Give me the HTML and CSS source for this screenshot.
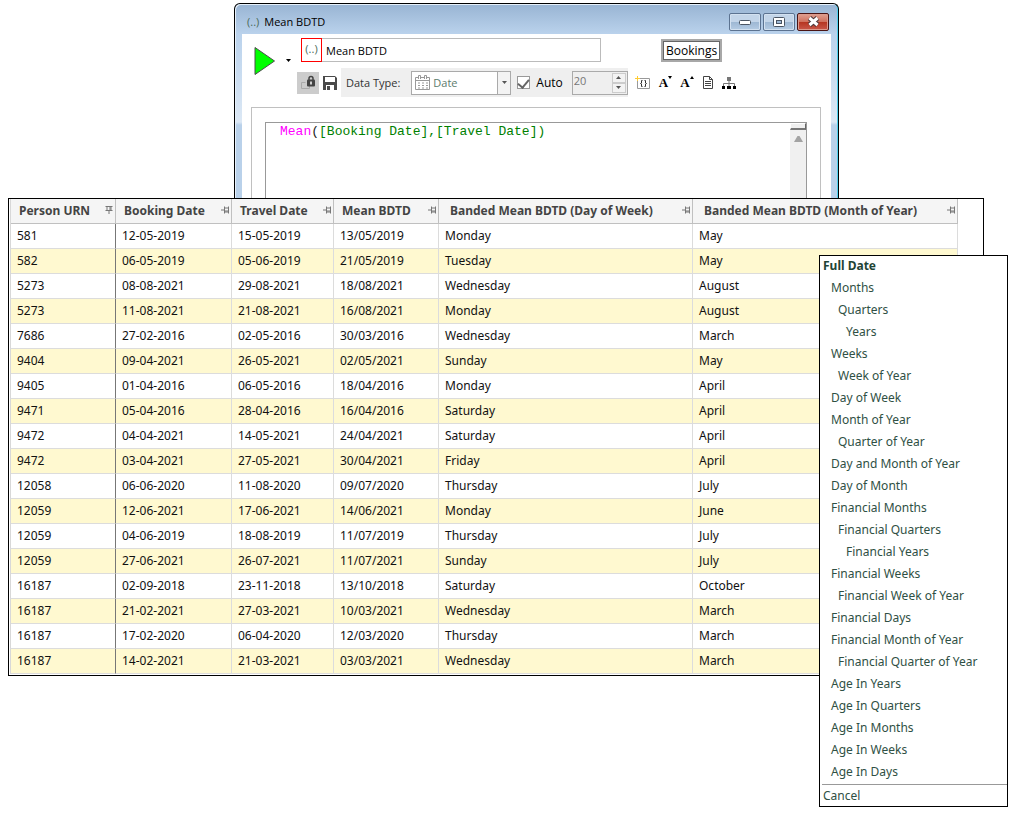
FILE: index.html
```html
<!DOCTYPE html>
<html lang="en">
<head>
    <meta charset="UTF-8">
    <meta name="viewport" content="width=device-width, initial-scale=1.0">
    <title>Mean BDTD</title>
    <link rel="stylesheet" href="styles.css">
</head>
<body>
    <svg class="sprite" aria-hidden="true">
        <symbol id="pin" viewBox="0 0 8 7">
            <path d="M0 3.5H3M3.5 0V7M3.5 1.5H7M3.5 4.5H7M3.5 5.5H7M7.5 0V7" fill="none" stroke="#777"/>
        </symbol>
        <symbol id="pin-down" viewBox="0 0 7 8">
            <path d="M3.5 5V8M0 4.5H7M1.5 0V4M4.5 0V4M5.5 0V4M0 0.5H7" fill="none" stroke="#777"/>
        </symbol>
    </svg>

    <!-- Expression window -->
    <section class="window">
        <header class="titlebar">
            <span class="title-icon">(..)</span>
            <h1 class="title">Mean BDTD</h1>
            <div class="window-buttons">
                <button class="win-btn" aria-label="Minimize">
                    <svg width="12" height="6" viewBox="0 0 12 6"><rect x="0.5" y="1.5" width="11" height="4" rx="1" fill="#fff" stroke="#4b5563"/></svg>
                </button>
                <button class="win-btn" aria-label="Maximize">
                    <svg width="12" height="10" viewBox="0 0 12 10"><rect x="0.5" y="0.5" width="11" height="9" rx="1" fill="#fff" stroke="#4b5563"/><rect x="3.5" y="3.5" width="5" height="3" fill="#9fb9d6" stroke="#4b5563"/></svg>
                </button>
                <button class="win-btn close" aria-label="Close">
                    <svg width="13" height="11" viewBox="0 0 13 11"><path d="M2.5 2L10.5 9M10.5 2L2.5 9" stroke="#49383c" stroke-width="5"/><path d="M2.5 2L10.5 9M10.5 2L2.5 9" stroke="#fff" stroke-width="3"/></svg>
                </button>
            </div>
        </header>

        <div class="window-body">
            <div class="top">
                <button class="run" aria-label="Run">
                    <svg width="22" height="30" viewBox="0 0 22 30"><path d="M1 1.5V28.5L20.5 15Z" fill="#0f0" stroke="#4d4d4d"/></svg>
                </button>
                <button class="run-more" aria-label="Run options">
                    <svg width="5" height="3" viewBox="0 0 5 3"><path d="M0 0H5L2.5 3Z"/></svg>
                </button>
                <div class="controls">
                    <div class="name-row">
                        <span class="expr-icon">(..)</span>
                        <input class="name-input" type="text" value="Mean BDTD" aria-label="Name">
                        <button class="table-btn">Bookings</button>
                    </div>
                    <div class="toolbar">
                        <button class="tool lock" aria-label="Lock">
                            <svg width="16" height="16" viewBox="0 0 16 16"><path d="M5.5 7.5H1.5V13.5H9.5V11" fill="none" stroke="#aaa"/><path d="M9 5V3.5a2 2 0 0 1 4 0V5" fill="none" stroke="#444" stroke-width="1.5"/><rect x="7" y="4.5" width="8" height="7" rx="1" fill="#444"/><path d="M11 6.5V9.5" stroke="#fff" stroke-width="1.5"/></svg>
                        </button>
                        <button class="tool save" aria-label="Save">
                            <svg width="16" height="16" viewBox="0 0 16 16"><path d="M1 1H13L15 3V15H1Z" fill="#4a4a4a"/><rect x="3" y="2" width="10" height="5" fill="#fff"/><rect x="4" y="10" width="8" height="5" fill="#fff"/><rect x="5" y="11" width="3" height="4" fill="#4a4a4a"/></svg>
                        </button>
                        <div class="type-strip">
                            <label for="dataType">Data Type:</label>
                            <div class="select-box">
                                <svg class="calendar" width="15" height="15" viewBox="0 0 15 15"><path d="M3 2.5H0.5V14.5H14.5V2.5H12M6 2.5H9M0.5 5.5H14.5" fill="none" stroke="#999"/><path d="M3.5 4V0.5H5.5V4M9.5 4V0.5H11.5V4" fill="none" stroke="#999"/><path d="M3 8H13M3 10.5H13M3 13H13" stroke="#999" stroke-dasharray="2 2"/></svg>
                                <select id="dataType" disabled>
                                    <option>Date</option>
                                </select>
                                <span class="select-arrow"><svg width="5" height="3" viewBox="0 0 5 3"><path d="M0 0H5L2.5 3Z" fill="#555"/></svg></span>
                            </div>
                            <input class="check" type="checkbox" id="auto" checked>
                            <label class="auto-label" for="auto">Auto</label>
                            <div class="spinner">
                                <input type="number" value="20" aria-label="Length" disabled>
                                <div class="spin-buttons">
                                    <button aria-label="Increase" disabled><svg width="5" height="3" viewBox="0 0 5 3"><path d="M0 3H5L2.5 0Z" fill="#555"/></svg></button>
                                    <button aria-label="Decrease" disabled><svg width="5" height="3" viewBox="0 0 5 3"><path d="M0 0H5L2.5 3Z" fill="#555"/></svg></button>
                                </div>
                            </div>
                        </div>
                        <div class="tool-icons">
                            <button class="tool" aria-label="Insert expression">
                                <svg width="16" height="14" viewBox="0 0 16 14"><path d="M5 2.5H14.5V12.5H2.5V5" fill="none" stroke="#999"/><path d="M2.5 0V5M0 2.5H5" stroke="#fc3"/><path d="M7.5 4.5H6.5V7L5.5 7.5L6.5 8V10.5H7.5M9.5 4.5H10.5V7L11.5 7.5L10.5 8V10.5H9.5" fill="none" stroke="#333"/></svg>
                            </button>
                            <button class="tool font-tool" aria-label="Decrease font">A<svg width="4" height="3" viewBox="0 0 4 3"><path d="M0 0H4L2 3Z"/></svg></button>
                            <button class="tool font-tool" aria-label="Increase font">A<svg width="4" height="3" viewBox="0 0 4 3"><path d="M0 3H4L2 0Z"/></svg></button>
                            <button class="tool" aria-label="Notes">
                                <svg width="12" height="14" viewBox="0 0 12 14"><path d="M1.5 0.5H7.5L10.5 3.5V12.5H1.5ZM7.5 0.5V3.5H10.5M3 5.5H9M3 7.5H9M3 9.5H9" fill="none" stroke="#444"/></svg>
                            </button>
                            <button class="tool" aria-label="Tree view">
                                <svg width="14" height="12" viewBox="0 0 14 12"><path d="M7 3V9M1.5 9V6.5H12.5V9" fill="none" stroke="#777"/><path d="M5 0H9V4H5Z" fill="#777"/><path d="M0 9H3V12H0ZM5 9H9V12H5ZM11 9H14V12H11Z"/></svg>
                            </button>
                        </div>
                    </div>
                </div>
            </div>

            <div class="editor-frame">
                <div class="editor">
                    <code class="code"><span class="fn">Mean</span><span class="paren">(</span>[Booking Date],[Travel Date])</code>
                    <div class="scrollbar">
                        <span class="splitter"></span>
                        <svg width="9" height="6" viewBox="0 0 9 6"><path d="M0 6L3.5 0H5.5L9 6Z" fill="#a3a3a3"/></svg>
                    </div>
                </div>
            </div>
        </div>
    </section>

    <!-- Data grid -->
    <section class="grid-panel">
        <table class="grid">
            <colgroup>
                <col class="c-urn"><col class="c-booking"><col class="c-travel"><col class="c-mean"><col class="c-day"><col>
            </colgroup>
            <thead>
                <tr>
                    <th><div class="head">Person URN <svg><use href="#pin-down"/></svg></div></th>
                    <th><div class="head">Booking Date <svg><use href="#pin"/></svg></div></th>
                    <th><div class="head">Travel Date <svg><use href="#pin"/></svg></div></th>
                    <th><div class="head">Mean BDTD <svg><use href="#pin"/></svg></div></th>
                    <th><div class="head wide">Banded Mean BDTD (Day of Week) <svg><use href="#pin"/></svg></div></th>
                    <th><div class="head wide">Banded Mean BDTD (Month of Year) <svg><use href="#pin"/></svg></div></th>
                </tr>
            </thead>
            <tbody>
                <tr><td>581</td><td>12-05-2019</td><td>15-05-2019</td><td>13/05/2019</td><td>Monday</td><td>May</td></tr>
                <tr><td>582</td><td>06-05-2019</td><td>05-06-2019</td><td>21/05/2019</td><td>Tuesday</td><td>May</td></tr>
                <tr><td>5273</td><td>08-08-2021</td><td>29-08-2021</td><td>18/08/2021</td><td>Wednesday</td><td>August</td></tr>
                <tr><td>5273</td><td>11-08-2021</td><td>21-08-2021</td><td>16/08/2021</td><td>Monday</td><td>August</td></tr>
                <tr><td>7686</td><td>27-02-2016</td><td>02-05-2016</td><td>30/03/2016</td><td>Wednesday</td><td>March</td></tr>
                <tr><td>9404</td><td>09-04-2021</td><td>26-05-2021</td><td>02/05/2021</td><td>Sunday</td><td>May</td></tr>
                <tr><td>9405</td><td>01-04-2016</td><td>06-05-2016</td><td>18/04/2016</td><td>Monday</td><td>April</td></tr>
                <tr><td>9471</td><td>05-04-2016</td><td>28-04-2016</td><td>16/04/2016</td><td>Saturday</td><td>April</td></tr>
                <tr><td>9472</td><td>04-04-2021</td><td>14-05-2021</td><td>24/04/2021</td><td>Saturday</td><td>April</td></tr>
                <tr><td>9472</td><td>03-04-2021</td><td>27-05-2021</td><td>30/04/2021</td><td>Friday</td><td>April</td></tr>
                <tr><td>12058</td><td>06-06-2020</td><td>11-08-2020</td><td>09/07/2020</td><td>Thursday</td><td>July</td></tr>
                <tr><td>12059</td><td>12-06-2021</td><td>17-06-2021</td><td>14/06/2021</td><td>Monday</td><td>June</td></tr>
                <tr><td>12059</td><td>04-06-2019</td><td>18-08-2019</td><td>11/07/2019</td><td>Thursday</td><td>July</td></tr>
                <tr><td>12059</td><td>27-06-2021</td><td>26-07-2021</td><td>11/07/2021</td><td>Sunday</td><td>July</td></tr>
                <tr><td>16187</td><td>02-09-2018</td><td>23-11-2018</td><td>13/10/2018</td><td>Saturday</td><td>October</td></tr>
                <tr><td>16187</td><td>21-02-2021</td><td>27-03-2021</td><td>10/03/2021</td><td>Wednesday</td><td>March</td></tr>
                <tr><td>16187</td><td>17-02-2020</td><td>06-04-2020</td><td>12/03/2020</td><td>Thursday</td><td>March</td></tr>
                <tr><td>16187</td><td>14-02-2021</td><td>21-03-2021</td><td>03/03/2021</td><td>Wednesday</td><td>March</td></tr>
            </tbody>
        </table>
    </section>

    <!-- Banding menu -->
    <nav class="menu">
        <button class="full">Full Date</button>
        <button class="l1">Months</button>
        <button class="l2">Quarters</button>
        <button class="l3">Years</button>
        <button class="l1">Weeks</button>
        <button class="l2">Week of Year</button>
        <button class="l1">Day of Week</button>
        <button class="l1">Month of Year</button>
        <button class="l2">Quarter of Year</button>
        <button class="l1">Day and Month of Year</button>
        <button class="l1">Day of Month</button>
        <button class="l1">Financial Months</button>
        <button class="l2">Financial Quarters</button>
        <button class="l3">Financial Years</button>
        <button class="l1">Financial Weeks</button>
        <button class="l2">Financial Week of Year</button>
        <button class="l1">Financial Days</button>
        <button class="l1">Financial Month of Year</button>
        <button class="l2">Financial Quarter of Year</button>
        <button class="l1">Age In Years</button>
        <button class="l1">Age In Quarters</button>
        <button class="l1">Age In Months</button>
        <button class="l1">Age In Weeks</button>
        <button class="l1">Age In Days</button>
        <hr>
        <button class="cancel">Cancel</button>
    </nav>
</body>
</html>
```
FILE: styles.css
```css
* { margin: 0; padding: 0; box-sizing: border-box; }

body {
    font-family: 'Segoe UI', 'Noto Sans', sans-serif;
    font-size: 12px;
    color: #111;
    background: #fff;
    padding-top: 3px;
}

button, input, select {
    font: inherit;
    color: inherit;
    border: none;
    background: none;
}

svg { display: block; flex: none; }

.sprite { width: 0; height: 0; position: absolute; }

/* Expression window */
.window {
    margin: 0 175px 0 234px;
    border: 1px solid #000;
    border-bottom: none;
    border-radius: 6px 6px 0 0;
    padding: 0 7px;
    font-family: 'Segoe UI', 'Open Sans', sans-serif;
    font-size: 11px;
    background: linear-gradient(#98b4d3, #bad2ec 30px, #dce8f5 118px, #b9d1ea 121px);
    box-shadow: inset 1px 1px 0 #e6f0fa, inset -1px 0 0 #4fd0ee;
}

.titlebar {
    display: flex;
    align-items: center;
    gap: 5px;
    height: 30px;
    padding: 5px 2px 0 5px;
}

.title {
    font-size: 11px;
    font-weight: normal;
    color: #000;
}

.title-icon, .expr-icon { color: #4a6a5a; }

.window-buttons {
    display: flex;
    gap: 2px;
    margin-left: auto;
}

.win-btn {
    display: flex;
    align-items: center;
    justify-content: center;
    width: 32px;
    height: 18px;
    border: 1px solid #5c7391;
    border-radius: 2px;
    background: linear-gradient(#c3d5e9 50%, #9db7d3 50%, #b5cce4);
    box-shadow: inset 0 0 0 1px #d3e1f0;
}

.win-btn.close {
    border-color: #4a1414;
    background: linear-gradient(#e0a091, #cf6f5c 50%, #b53420 50%, #c9584a);
    box-shadow: inset 0 0 0 1px #dc9a8c;
}

.window-body {
    background: #fff;
    padding: 4px 10px 0 9px;
}

.top { display: flex; }

.run { align-self: flex-start; margin: 8px 0 0 3px; }

.run-more {
    align-self: flex-start;
    margin: 21px 10px 0 10px;
}

.name-row {
    display: flex;
    align-items: center;
    height: 24px;
}

.expr-icon {
    width: 21px;
    height: 24px;
    line-height: 20px;
    text-align: center;
    border: 1px solid #f00;
}

.name-input {
    width: 279px;
    height: 24px;
    padding: 0 4px;
    border: 1px solid #bbb;
    border-left: none;
    color: #000;
}

.table-btn {
    height: 23px;
    line-height: 17px;
    margin-left: 60px;
    padding: 0 3px;
    border: 2px solid #a8a8a8;
    box-shadow: inset 0 0 0 1px #666;
    font-size: 12px;
    color: #000;
}

.controls { flex: 1; }

.toolbar {
    display: flex;
    align-items: center;
    height: 29px;
    margin: 6px 0 10px -4px;
}

.tool { display: flex; align-items: center; justify-content: center; }

.tool.lock {
    width: 22px;
    height: 22px;
    background: #ccc;
}

.tool.save { width: 22px; }

.type-strip {
    display: flex;
    align-items: center;
    height: 29px;
    padding-left: 5px;
    background: #efefef;
    color: #333;
}

.select-box {
    display: flex;
    align-items: center;
    width: 100px;
    height: 24px;
    margin: 0 6px 0 11px;
    border: 1px solid #aaa;
    background: #fff;
}

.calendar { margin-left: 3px; }

.select-box select {
    flex: 1;
    min-width: 0;
    padding-left: 3px;
    appearance: none;
    color: #5c7c6c;
    opacity: 1;
}

.select-arrow {
    display: flex;
    align-items: center;
    justify-content: center;
    align-self: stretch;
    width: 13px;
    border-left: 1px solid #aaa;
    background: #f3f3f3;
}

.check {
    appearance: none;
    display: flex;
    justify-content: center;
    width: 13px;
    height: 13px;
    margin-right: 6px;
    border: 1px solid #999;
    background: #fff;
}

.check:checked::before {
    content: "";
    width: 5px;
    height: 9px;
    border: solid #666;
    border-width: 0 2px 2px 0;
    transform: rotate(40deg);
}

.auto-label {
    font-size: 12px;
    color: #000;
}

.spinner {
    display: flex;
    width: 56px;
    height: 24px;
    margin-left: 9px;
    border: 1px solid #aaa;
}

.spinner input {
    flex: 1;
    min-width: 0;
    height: 18px;
    padding-left: 1px;
    color: #777;
    appearance: textfield;
}

.spin-buttons {
    display: flex;
    flex-direction: column;
    width: 16px;
    padding: 1px;
}

.spin-buttons button {
    display: flex;
    flex: 1;
    align-items: center;
    justify-content: center;
    border: 1px solid #ccc;
    background: #f3f3f3;
}

.tool-icons {
    display: flex;
    align-items: center;
    gap: 8px;
    margin-left: 7px;
}

.font-tool {
    align-items: flex-start;
    font: bold 13px/13px 'Liberation Serif', serif;
    color: #000;
}

/* Editor */
.editor-frame {
    border: 1px solid #c0c0c0;
    border-bottom: none;
    padding: 14px 13px 0;
}

.editor {
    display: flex;
    justify-content: space-between;
    height: 76px;
    border: 1px solid #999;
    border-bottom: none;
}

.code {
    padding: 1px 14px;
    font: 13px/16px 'Courier New', 'Liberation Mono', monospace;
    color: #008000;
}

.fn { color: #f0f; }
.paren { color: #222; }

.scrollbar {
    display: flex;
    flex-direction: column;
    align-items: center;
    gap: 6px;
    width: 16px;
    background: #f0f0f0;
}

.splitter {
    width: 16px;
    height: 7px;
    background: #f0f0f0;
    border: 1px solid #fff;
    border-right-color: #666;
    border-bottom: 2px solid #777;
}

/* Data grid */
.grid-panel {
    margin: 0 30px 0 8px;
    padding: 0 25px 1px 1px;
    border: 1px solid #000;
    background: #fff;
}

.grid {
    width: 100%;
    table-layout: fixed;
    border-collapse: separate;
    border-spacing: 0;
    border-left: 1px solid #d8d8d8;
}

.c-urn { width: 105px; }
.c-booking { width: 116px; }
.c-travel { width: 102px; }
.c-mean { width: 105px; }
.c-day { width: 254px; }

.grid th, .grid td {
    height: 25px;
    text-align: left;
    white-space: nowrap;
    border-right: 1px solid #dcdcdc;
    border-bottom: 1px solid #dcdcdc;
}

.grid th {
    padding-bottom: 2px;
    background: #f5f5f5;
    color: #444;
    border-color: #c0c0c0;
}

.grid td { padding: 0 6px 2px; }

.grid td:first-child { border-right-color: #777; }

.grid tbody tr:nth-child(even) { background: #fff9d0; }

.head {
    display: flex;
    align-items: center;
    justify-content: space-between;
    padding: 0 2px 0 8px;
}

.head.wide { padding-left: 11px; }

.head svg { width: 8px; height: 8px; }

/* Banding menu */
.menu {
    position: absolute;
    top: 255px;
    right: 6px;
    display: flex;
    flex-direction: column;
    width: 189px;
    border: 1px solid #000;
    background: #fff;
    color: #2f5044;
}

.menu button {
    height: 22px;
    text-align: left;
}

.menu .full {
    height: 20px;
    padding: 0 0 2px 3px;
    font-weight: bold;
    color: #1f4435;
}

.menu .l1 { padding-left: 11px; }
.menu .l2 { padding-left: 18px; }
.menu .l3 { padding-left: 26px; }

.menu hr {
    margin: 2px 0 0 2px;
    border: none;
    border-top: 1px solid #999;
}

.menu .cancel { height: 21px; padding-left: 3px; }
```
